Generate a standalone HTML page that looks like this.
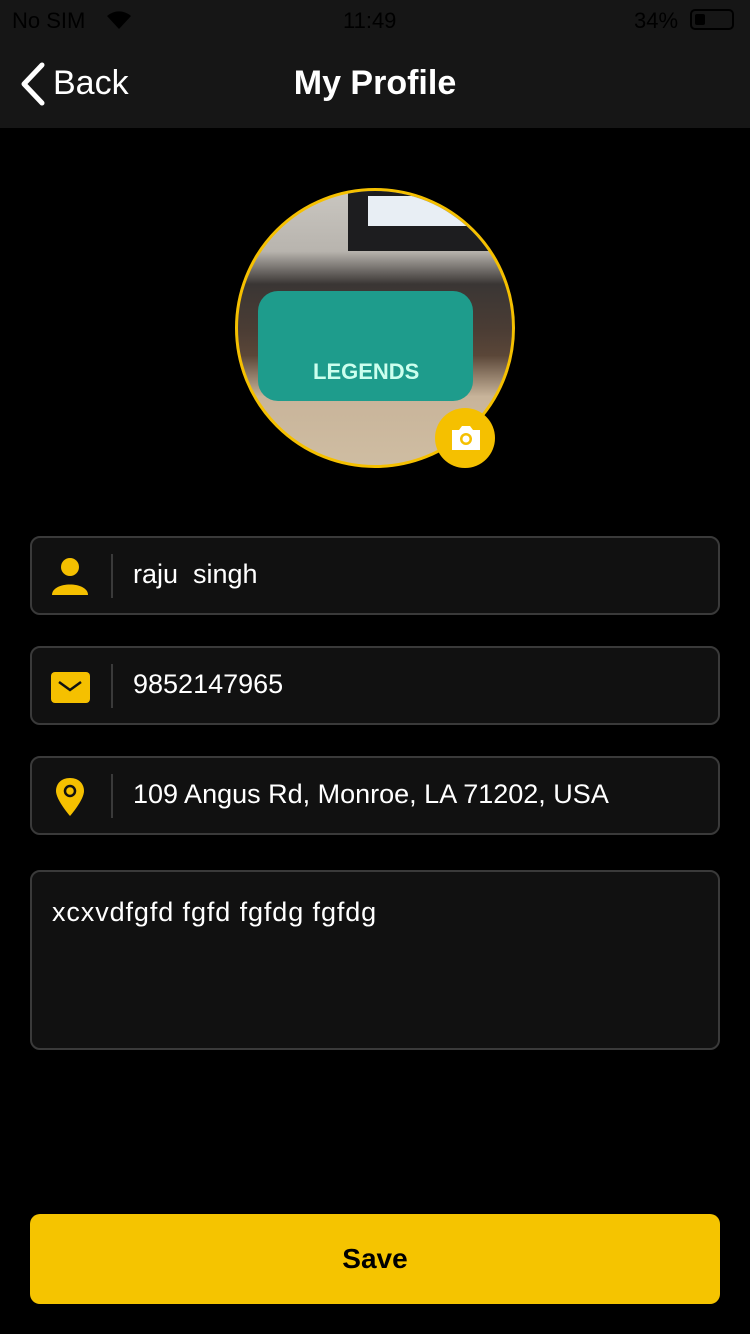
<!DOCTYPE html>
<html><head><meta charset="utf-8"><style>
*{margin:0;padding:0;box-sizing:border-box}
body{width:750px;height:1334px;background:#000;font-family:"Liberation Sans",sans-serif;position:relative;overflow:hidden;color:#fff}
.top{position:absolute;left:0;top:0;width:750px;height:128px;background:#161616}
.sb{position:absolute;top:8px;font-size:22px;color:#000}
.field{position:absolute;left:30px;width:690px;background:#111;border:2px solid #3a3a3a;border-radius:10px}
.field .sep{position:absolute;left:79px;top:16px;width:2px;height:44px;background:#3a3a3a}
.field .t{position:absolute;left:101px;top:21px;font-size:27px;color:#fff}
.field svg{position:absolute;left:18px;top:18px}
</style></head><body>
<div class="top">
 <div class="sb" style="left:12px">No SIM</div>
 <svg style="position:absolute;left:106px;top:10px" width="26" height="20" viewBox="0 0 26 20"><path d="M13 19 L1 6 A18 18 0 0 1 25 6 Z" fill="#000"/></svg>
 <div class="sb" style="left:343px">11:49</div>
 <div class="sb" style="left:634px">34%</div>
 <div style="position:absolute;left:690px;top:9px;width:44px;height:21px;border:2px solid #000;border-radius:5px"><div style="position:absolute;left:3px;top:3px;width:10px;height:11px;background:#000;border-radius:2px"></div></div>
 <svg style="position:absolute;left:18px;top:62px" width="28" height="44" viewBox="0 0 28 44"><path d="M24 3 L6 22 L24 41" stroke="#fff" stroke-width="5" fill="none" stroke-linecap="round" stroke-linejoin="round"/></svg>
 <div style="position:absolute;left:53px;top:64px;font-size:34px">Back</div>
 <div style="position:absolute;left:0;width:750px;text-align:center;top:64px;font-size:34px;font-weight:bold">My Profile</div>
</div>
<div style="position:absolute;left:235px;top:188px;width:280px;height:280px;border-radius:50%;border:3px solid #f5c000;overflow:hidden;background:linear-gradient(180deg,#c9c6c0 0%,#b8b4ae 22%,#3a3634 34%,#4a3c34 50%,#5a4638 60%,#c8b49a 75%,#cfbda2 100%)">
 <div style="position:absolute;left:110px;top:0;width:170px;height:60px;background:#1d1d1f"></div>
 <div style="position:absolute;left:130px;top:5px;width:150px;height:30px;background:#e8eef4"></div>
 <div style="position:absolute;left:20px;top:100px;width:215px;height:110px;background:#1e9c8c;border-radius:20px"></div>
 <div style="position:absolute;left:75px;top:168px;font-size:22px;font-weight:bold;color:#cfe">LEGENDS</div>
</div>
<div style="position:absolute;left:435px;top:408px;width:60px;height:60px;border-radius:50%;background:#f5c000"></div>
<svg style="position:absolute;left:449px;top:424px" width="34" height="28" viewBox="0 0 34 28"><path d="M3 6 H10 L13 2 H21 L24 6 H31 V26 H3 Z" fill="#fff"/><circle cx="17" cy="15" r="6" fill="#f5c000"/><circle cx="17" cy="15" r="3.5" fill="#fff"/></svg>
<div class="field" style="top:536px;height:79px"><svg width="40" height="40" viewBox="0 0 40 40"><circle cx="20" cy="11" r="9" fill="#f5c000"/><path d="M2 39 C2 25 38 25 38 39 Z" fill="#f5c000"/></svg><div class="sep"></div><div class="t">raju&nbsp; singh</div></div>
<div class="field" style="top:646px;height:79px"><svg width="40" height="40" viewBox="0 0 40 40"><rect x="1" y="6" width="39" height="31" rx="4" fill="#f5c000"/><path d="M9 16 L20 24 L31 16" stroke="#111" stroke-width="2.5" fill="none"/></svg><div class="sep"></div><div class="t">9852147965</div></div>
<div class="field" style="top:756px;height:79px"><svg width="40" height="42" viewBox="0 0 40 42"><path d="M20 2 C11 2 6 8 6 15 C6 24 20 40 20 40 C20 40 34 24 34 15 C34 8 29 2 20 2 Z" fill="#f5c000"/><circle cx="20" cy="15" r="5" fill="none" stroke="#111" stroke-width="2.5"/></svg><div class="sep"></div><div class="t">109 Angus Rd, Monroe, LA 71202, USA</div></div>
<div class="field" style="top:870px;height:180px"><div class="t" style="left:20px;top:25px;letter-spacing:0.9px">xcxvdfgfd fgfd fgfdg fgfdg</div></div>
<div style="position:absolute;left:30px;top:1214px;width:690px;height:90px;background:#f5c400;border-radius:10px;color:#000;font-weight:bold;font-size:28px;text-align:center;line-height:90px">Save</div>
</body></html>
